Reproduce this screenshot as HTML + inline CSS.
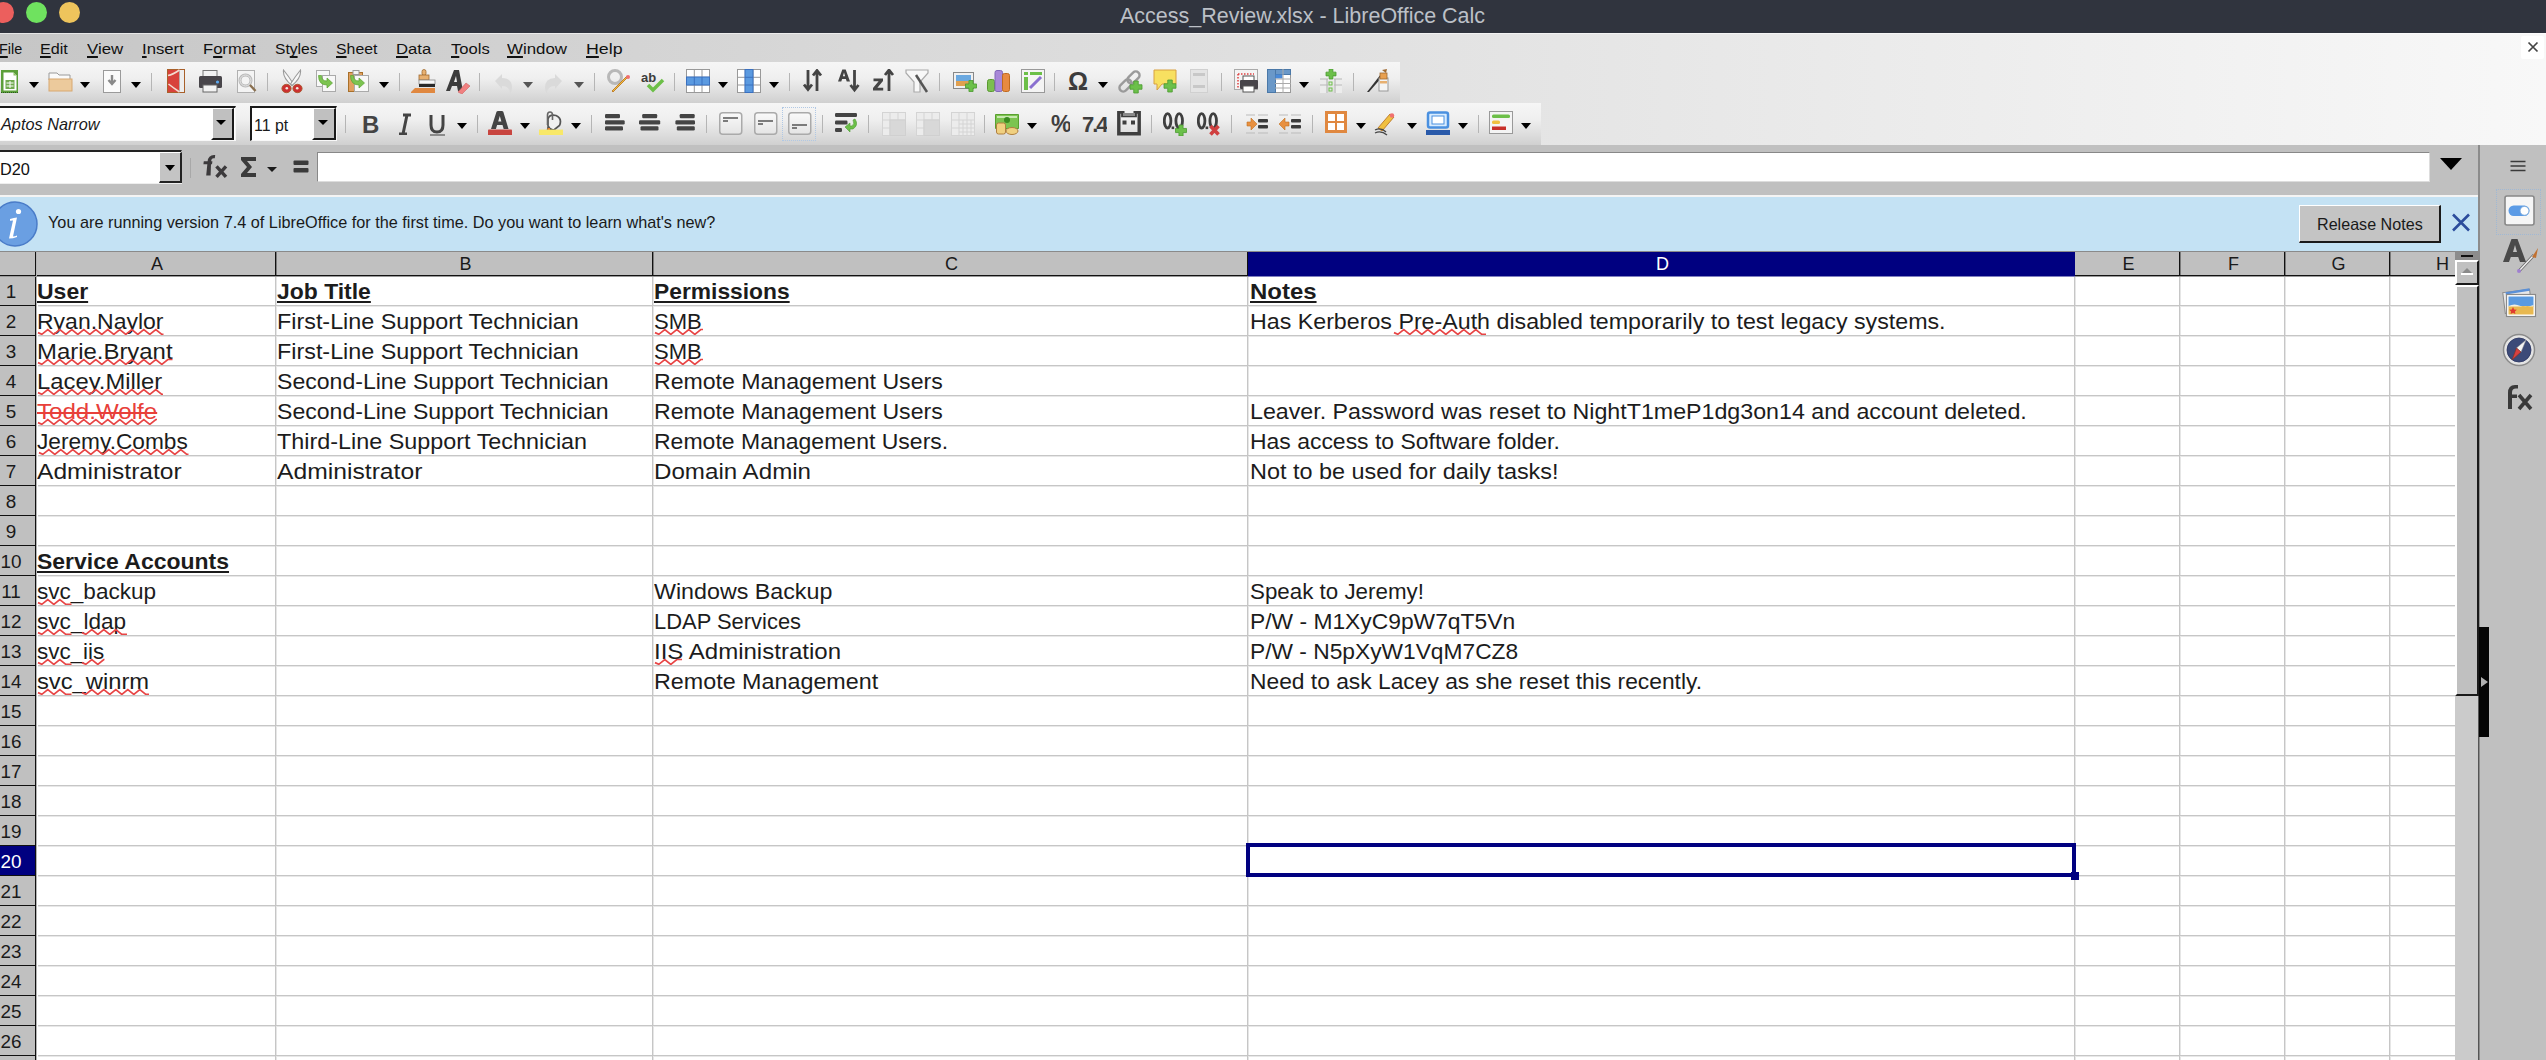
<!DOCTYPE html><html><head><meta charset="utf-8"><style>
*{margin:0;padding:0;box-sizing:border-box}
html,body{width:2546px;height:1060px;overflow:hidden;background:#c0c0c0;font-family:"Liberation Sans", sans-serif;}
.a{position:absolute}
.t{position:absolute;white-space:nowrap;line-height:1}
.ic{position:absolute}
.dd{position:absolute;width:0;height:0;border-left:5px solid transparent;border-right:5px solid transparent;border-top:6px solid #000}
.sep{position:absolute;width:1px;background:#b5b5b5}
.cell{position:absolute;white-space:nowrap;text-decoration-skip-ink:none;font-size:21.5px;line-height:1;color:#000;transform-origin:0 0}
</style></head><body>
<div class="a" style="left:0;top:0;width:2546px;height:33px;background:#30343e"></div>
<div class="a" style="left:-7px;top:2px;width:21px;height:21px;border-radius:50%;background:#ec5f5d"></div>
<div class="a" style="left:26px;top:2px;width:21px;height:21px;border-radius:50%;background:#6fe25f"></div>
<div class="a" style="left:59px;top:2px;width:21px;height:21px;border-radius:50%;background:#eec45c"></div>
<div class="t" style="left:1120.1px;top:4.5px;font-size:22px;color:#bcc0c7;transform:scaleX(0.9769);transform-origin:0 0;">Access_Review.xlsx - LibreOffice Calc</div>
<div class="a" style="left:0;top:33px;width:2546px;height:112px;background:linear-gradient(to right,#c6c6c6 0%,#d4d4d4 25%,#e2e2e2 55%,#eeeeee 80%,#f8f8f8 100%)"></div>
<div class="t" style="left:-0.63px;top:40.6px;font-size:15.5px;color:#111;transform:scaleX(0.9291);transform-origin:0 0;"><u style="text-decoration-thickness:1.5px;text-underline-offset:2px;text-decoration-skip-ink:none">F</u>ile</div>
<div class="t" style="left:40.46px;top:40.6px;font-size:15.5px;color:#111;transform:scaleX(1.0416);transform-origin:0 0;"><u style="text-decoration-thickness:1.5px;text-underline-offset:2px;text-decoration-skip-ink:none">E</u>dit</div>
<div class="t" style="left:87.4px;top:40.6px;font-size:15.5px;color:#111;transform:scaleX(1.0843);transform-origin:0 0;"><u style="text-decoration-thickness:1.5px;text-underline-offset:2px;text-decoration-skip-ink:none">V</u>iew</div>
<div class="t" style="left:142.22px;top:40.6px;font-size:15.5px;color:#111;transform:scaleX(1.0791);transform-origin:0 0;"><u style="text-decoration-thickness:1.5px;text-underline-offset:2px;text-decoration-skip-ink:none">I</u>nsert</div>
<div class="t" style="left:202.53px;top:40.6px;font-size:15.5px;color:#111;transform:scaleX(1.0701);transform-origin:0 0;">F<u style="text-decoration-thickness:1.5px;text-underline-offset:2px;text-decoration-skip-ink:none">o</u>rmat</div>
<div class="t" style="left:274.6px;top:40.6px;font-size:15.5px;color:#111;transform:scaleX(1.008);transform-origin:0 0;">St<u style="text-decoration-thickness:1.5px;text-underline-offset:2px;text-decoration-skip-ink:none">y</u>les</div>
<div class="t" style="left:336.3px;top:40.6px;font-size:15.5px;color:#111;transform:scaleX(1.0219);transform-origin:0 0;"><u style="text-decoration-thickness:1.5px;text-underline-offset:2px;text-decoration-skip-ink:none">S</u>heet</div>
<div class="t" style="left:395.63px;top:40.6px;font-size:15.5px;color:#111;transform:scaleX(1.0741);transform-origin:0 0;"><u style="text-decoration-thickness:1.5px;text-underline-offset:2px;text-decoration-skip-ink:none">D</u>ata</div>
<div class="t" style="left:450.7px;top:40.6px;font-size:15.5px;color:#111;transform:scaleX(1.0704);transform-origin:0 0;"><u style="text-decoration-thickness:1.5px;text-underline-offset:2px;text-decoration-skip-ink:none">T</u>ools</div>
<div class="t" style="left:507.3px;top:40.6px;font-size:15.5px;color:#111;transform:scaleX(1.0888);transform-origin:0 0;"><u style="text-decoration-thickness:1.5px;text-underline-offset:2px;text-decoration-skip-ink:none">W</u>indow</div>
<div class="t" style="left:585.85px;top:40.6px;font-size:15.5px;color:#111;transform:scaleX(1.1468);transform-origin:0 0;"><u style="text-decoration-thickness:1.5px;text-underline-offset:2px;text-decoration-skip-ink:none">H</u>elp</div>
<div class="a" style="left:0;top:33px;width:2546px;height:1px;background:rgba(255,255,255,0.55)"></div>
<div class="a" style="left:2521px;top:36px;width:23px;height:23px;background:#fff;border-radius:2px"></div>
<svg class="ic" style="left:2527px;top:41px" width="12" height="12" viewBox="0 0 12 12"><path d="M1.5,1.5 l9,9 M10.5,1.5 l-9,9" stroke="#444" stroke-width="1.7"/></svg>
<div class="a" style="left:0;top:62px;width:1400px;height:41px;background:linear-gradient(#f6f6f6,#efefef 40%,#d0d0d0)"></div>
<div class="a" style="left:0;top:103px;width:1541px;height:42px;background:linear-gradient(#f6f6f6,#efefef 40%,#d0d0d0)"></div>
<svg width="0" height="0" style="position:absolute"><defs><linearGradient id="gbox" x1="0" y1="0" x2="0" y2="1"><stop offset="0" stop-color="#fafafa"/><stop offset="1" stop-color="#e4e4e4"/></linearGradient></defs></svg>
<svg class="ic" style="left:0px;top:69px" width="19" height="25" viewBox="0 0 19 25"><rect x="1" y="1" width="17" height="23" fill="#5c9f3a"/><path d="M3.5,3.5 h10 l3,3 v15 h-13 z" fill="#fff"/><path d="M13.5,3.5 l3,3 h-3z" fill="#8cc060"/><rect x="5.5" y="11" width="9" height="9" fill="#72aa50"/><path d="M6.5,14 h7 M6.5,17 h7 M10,12 v7" stroke="#fff" stroke-width="1"/><path d="M1,23.5 h17" stroke="#2a5a20" stroke-width="1" stroke-dasharray="1,1"/></svg>
<div class="dd" style="left:29px;top:82px;border-left-width:5.0px;border-right-width:5.0px;border-top:6px solid #000"></div>
<svg class="ic" style="left:48px;top:70px" width="25" height="22" viewBox="0 0 25 22"><path d="M1,3 h8 l2,2 h11 v5 h-21 z" fill="#fafafa" stroke="#9a9a9a" stroke-width="1"/><rect x="1" y="9" width="23" height="12" fill="#ecca9c" stroke="#d8a870" stroke-width="1"/></svg>
<div class="dd" style="left:80px;top:82px;border-left-width:5.0px;border-right-width:5.0px;border-top:6px solid #000"></div>
<svg class="ic" style="left:102px;top:69px" width="20" height="25" viewBox="0 0 20 25"><rect x="1.5" y="1.5" width="17" height="22" fill="#fbfbfb" stroke="#9a9a9a" stroke-width="1"/><path d="M10,6 v8 M6.5,11 l3.5,4 l3.5,-4" stroke="#8a8a8a" stroke-width="2.4" fill="none"/></svg>
<div class="dd" style="left:131px;top:82px;border-left-width:5.0px;border-right-width:5.0px;border-top:6px solid #000"></div>
<div class="sep" style="left:151px;top:73px;height:18px"></div>
<svg class="ic" style="left:167px;top:69px" width="18" height="25" viewBox="0 0 18 25"><rect x="0.5" y="0.5" width="17" height="23" fill="#d8423b" stroke="#a8602a" stroke-width="1"/><path d="M12.5,1 v22 h4.5 v-22z" fill="#eeeeee"/><path d="M12.5,1 v22" stroke="#b0b0b0" stroke-width="0.8"/><path d="M1,6.5 q5,-1 11.5,-5.5 M1.5,15 q5,4 11,8" stroke="#f2dcd0" stroke-width="1.6" fill="none"/></svg>
<svg class="ic" style="left:198px;top:69px" width="25" height="25" viewBox="0 0 25 25"><rect x="5" y="1.5" width="14" height="7" fill="#f2f2f2" stroke="#777" stroke-width="1"/><rect x="1" y="7" width="23" height="12" rx="1.5" fill="#48454a"/><circle cx="19.5" cy="13" r="1.6" fill="#5aa8f0"/><rect x="5" y="16" width="14" height="7" fill="#f2f2f2" stroke="#666" stroke-width="1"/></svg>
<svg class="ic" style="left:236px;top:69px" width="21" height="25" viewBox="0 0 21 25"><rect x="1.5" y="1.5" width="17" height="22" fill="#f4f4f4" stroke="#b0b0b0" stroke-width="1"/><circle cx="9.5" cy="11.5" r="5.5" fill="none" stroke="#b8b8b8" stroke-width="3"/><circle cx="9.5" cy="11.5" r="5.5" fill="none" stroke="#e8e8e8" stroke-width="1"/><path d="M14,16 l5.5,6" stroke="#8a7050" stroke-width="2.4"/></svg>
<div class="sep" style="left:267px;top:73px;height:18px"></div>
<svg class="ic" style="left:281px;top:69px" width="22" height="25" viewBox="0 0 22 25"><path d="M2.5,1 q-1,8 8.5,15.5 l1.5,-1.5 q-5,-8 -10,-14z" fill="#f8f8f8" stroke="#9a9a9a" stroke-width="1.1"/><path d="M19.5,1 q1,8 -8.5,15.5 l-1.5,-1.5 q5,-8 10,-14z" fill="#f8f8f8" stroke="#9a9a9a" stroke-width="1.1"/><ellipse cx="5.5" cy="19.5" rx="4.6" ry="4.2" fill="#cc3030" stroke="#a85a30" stroke-width="0.9"/><ellipse cx="16.5" cy="19.5" rx="4.6" ry="4.2" fill="#cc3030" stroke="#a85a30" stroke-width="0.9"/><circle cx="5.8" cy="19.2" r="1.3" fill="#f4e8e0"/><circle cx="16.2" cy="19.2" r="1.3" fill="#f4e8e0"/></svg>
<svg class="ic" style="left:316px;top:70px" width="21" height="23" viewBox="0 0 21 23"><rect x="0.5" y="0.5" width="13" height="16" fill="#f8f8f8" stroke="#aaa" stroke-width="1"/><rect x="6.5" y="5.5" width="13" height="16" fill="#f8f8f8" stroke="#aaa" stroke-width="1"/><path d="M2.5,5.5 h3 q0,5.5 5.5,5.5 v-3 l5.5,5 l-5.5,5 v-3 q-8.5,0 -8.5,-9.5z" fill="#7cc450" stroke="#5aa030" stroke-width="0.7"/></svg>
<svg class="ic" style="left:348px;top:70px" width="22" height="23" viewBox="0 0 22 23"><rect x="0.5" y="2.5" width="14" height="19" fill="#e0a060" stroke="#a8702a" stroke-width="1"/><rect x="5" y="0.5" width="6" height="4" fill="#f4f4f4" stroke="#999" stroke-width="1"/><rect x="6.5" y="5.5" width="14" height="16" fill="#f8f8f8" stroke="#aaa" stroke-width="1"/><path d="M2.5,5.5 h3 q0,5.5 5.5,5.5 v-3 l5.5,5 l-5.5,5 v-3 q-8.5,0 -8.5,-9.5z" fill="#7cc450" stroke="#5aa030" stroke-width="0.7"/></svg>
<div class="dd" style="left:379px;top:82px;border-left-width:5.0px;border-right-width:5.0px;border-top:6px solid #000"></div>
<div class="sep" style="left:399px;top:73px;height:18px"></div>
<svg class="ic" style="left:411px;top:69px" width="25" height="25" viewBox="0 0 25 25"><rect x="11" y="0.5" width="4" height="6" rx="2" fill="#e8b070" stroke="#a06a30" stroke-width="0.8"/><rect x="8" y="6" width="10" height="5" fill="#e8b070" stroke="#a06a30" stroke-width="0.8"/><rect x="8" y="11" width="16" height="4" fill="#f8f8f8" stroke="#888" stroke-width="0.8"/><rect x="8" y="15" width="16" height="3" fill="#2a2a2a"/><path d="M0,23 l4,-4 h20 v5 h-24z" fill="#e08840"/></svg>
<svg class="ic" style="left:446px;top:69px" width="25" height="25" viewBox="0 0 25 25"><path d="M0,22 l8,-21 h5 l4,21 h-5 l-1,-5 h-5 l-2,5z M8,13 h3 l-1,-6z" fill="#3c3c3c" fill-rule="evenodd"/><path d="M12,23 l8,-9 l4,3 l-8,8z" fill="#f08080" stroke="#d06060" stroke-width="0.6"/></svg>
<div class="sep" style="left:479px;top:73px;height:18px"></div>
<svg class="ic" style="left:494px;top:73px" width="19" height="22" viewBox="0 0 19 22"><path d="M1,8 l7,-7 v4 q10,0 10,10 q0,3 -2,6 q0,-8 -8,-8 v3z" fill="#dadada"/></svg>
<div class="dd" style="left:523px;top:82px;border-left-width:5.0px;border-right-width:5.0px;border-top:6px solid #555"></div>
<svg class="ic" style="left:544px;top:73px" width="19" height="22" viewBox="0 0 19 22"><path d="M18,8 l-7,-7 v4 q-10,0 -10,10 q0,3 2,6 q0,-8 8,-8 v3z" fill="#dadada"/></svg>
<div class="dd" style="left:574px;top:82px;border-left-width:5.0px;border-right-width:5.0px;border-top:6px solid #555"></div>
<div class="sep" style="left:594px;top:73px;height:18px"></div>
<svg class="ic" style="left:607px;top:69px" width="24" height="25" viewBox="0 0 24 25"><circle cx="8" cy="8" r="6.5" fill="none" stroke="#b8b8b8" stroke-width="3"/><path d="M21,8 l-15,15 l-1,-1 l15,-15z" fill="#f0c040" stroke="#c08030" stroke-width="1"/><circle cx="21" cy="8" r="2" fill="#f07070"/></svg>
<svg class="ic" style="left:641px;top:69px" width="24" height="25" viewBox="0 0 24 25"><text x="0" y="13" font-family="Liberation Sans" font-weight="bold" font-size="13" fill="#3c3c3c">ab</text><path d="M7,16 l5,5 l10,-10" stroke="#6cbf48" stroke-width="3.5" fill="none"/></svg>
<div class="sep" style="left:674px;top:73px;height:18px"></div>
<svg class="ic" style="left:686px;top:69px" width="24" height="24" viewBox="0 0 24 24"><rect x="0.5" y="0.5" width="23" height="23" fill="#fff" stroke="#999" stroke-width="1"/><path d="M8.3,0 v24 M16,0 v24 M0,8.3 h24 M0,16 h24" stroke="#999" stroke-width="1"/><rect x="0.5" y="8" width="23" height="8" fill="#5b9ae0" stroke="#3a70c0" stroke-width="1"/><path d="M8.3,8 v8 M16,8 v8" stroke="#3a70c0" stroke-width="1"/></svg>
<div class="dd" style="left:718px;top:82px;border-left-width:5.0px;border-right-width:5.0px;border-top:6px solid #000"></div>
<svg class="ic" style="left:737px;top:69px" width="24" height="24" viewBox="0 0 24 24"><rect x="0.5" y="0.5" width="23" height="23" fill="#fff" stroke="#999" stroke-width="1"/><path d="M8.3,0 v24 M16,0 v24 M0,8.3 h24 M0,16 h24" stroke="#999" stroke-width="1"/><rect x="8" y="0.5" width="8" height="23" fill="#5b9ae0" stroke="#3a70c0" stroke-width="1"/><path d="M8,8.3 h8 M8,16 h8" stroke="#3a70c0" stroke-width="1"/></svg>
<div class="dd" style="left:769px;top:82px;border-left-width:5.0px;border-right-width:5.0px;border-top:6px solid #000"></div>
<div class="sep" style="left:789px;top:73px;height:18px"></div>
<svg class="ic" style="left:803px;top:69px" width="22" height="24" viewBox="0 0 22 24"><path d="M5,1 v19 M1,15.5 l4,5 l4,-5" stroke="#444" stroke-width="2.8" fill="none"/><path d="M14,22 v-19 M10,6.5 l4,-5 l4,5" stroke="#444" stroke-width="2.8" fill="none"/></svg>
<svg class="ic" style="left:838px;top:69px" width="22" height="24" viewBox="0 0 22 24"><path d="M0,12.5 L4.3,0.5 h3.4 L12,12.5 h-3.3 l-0.8,-2.6 h-3.8 l-0.8,2.6z M4.9,7.2 h2.2 l-1.1,-3.6z" fill="#444" fill-rule="evenodd"/><path d="M16.5,1 v20 M12.5,16 l4,5 l4,-5" stroke="#444" stroke-width="2.8" fill="none"/></svg>
<svg class="ic" style="left:873px;top:69px" width="22" height="24" viewBox="0 0 22 24"><path d="M0.5,9.5 h9.5 v2.6 l-5.6,6.6 h5.8 v2.8 h-10.2 v-2.6 l5.6,-6.6 h-5.1z" fill="#444"/><path d="M16,22 v-20 M12,6 l4,-5 l4,5" stroke="#444" stroke-width="2.8" fill="none"/></svg>
<svg class="ic" style="left:905px;top:69px" width="24" height="24" viewBox="0 0 24 24"><path d="M1,1 h22 v3 l-8,9 v10 h-6 v-10 l-8,-9z" fill="#f8f8f8" stroke="#aaa" stroke-width="1.2"/><path d="M11,6 l11,17" stroke="#555" stroke-width="2.5"/></svg>
<div class="sep" style="left:939px;top:73px;height:18px"></div>
<svg class="ic" style="left:953px;top:69px" width="24" height="24" viewBox="0 0 24 24"><rect x="0.5" y="3.5" width="20" height="16" fill="#f0f0f0" stroke="#888" stroke-width="1"/><rect x="3" y="6" width="15" height="11" fill="#6aa8e0"/><rect x="3" y="12" width="15" height="5" fill="#e0a050"/><path d="M15.9375,11.5 h4.125 v3.4375 h3.4375 v4.125 h-3.4375 v3.4375 h-4.125 v-3.4375 h-3.4375 v-4.125 h3.4375 z" fill="#6cc04a" stroke="#4a9a30" stroke-width="0.8"/></svg>
<svg class="ic" style="left:987px;top:69px" width="24" height="24" viewBox="0 0 24 24"><rect x="0.5" y="10.5" width="7" height="12" rx="2" fill="#7cbf50" stroke="#5a9a30" stroke-width="1"/><rect x="8" y="1.5" width="7.5" height="21" rx="2" fill="#a888d8" stroke="#8068b8" stroke-width="1"/><rect x="15.5" y="4.5" width="7" height="18" rx="2" fill="#e88a40" stroke="#c06a20" stroke-width="1"/></svg>
<svg class="ic" style="left:1021px;top:69px" width="24" height="24" viewBox="0 0 24 24"><rect x="0.5" y="0.5" width="23" height="23" fill="#f4f4f4" stroke="#999" stroke-width="1"/><rect x="3" y="3" width="4" height="3" fill="#6cbf48"/><rect x="9" y="3" width="12" height="3" fill="#6cbf48"/><rect x="3" y="8" width="4" height="13" fill="#6cbf48"/><path d="M9,19 l11,-11" stroke="#8a70d0" stroke-width="3"/></svg>
<div class="sep" style="left:1054px;top:73px;height:18px"></div>
<svg class="ic" style="left:1067px;top:69px" width="22" height="24" viewBox="0 0 22 24"><text x="11" y="21" text-anchor="middle" font-family="Liberation Sans" font-weight="bold" font-size="25" fill="#3c3c3c">&#937;</text></svg>
<div class="dd" style="left:1098px;top:82px;border-left-width:5.0px;border-right-width:5.0px;border-top:6px solid #000"></div>
<svg class="ic" style="left:1118px;top:69px" width="25" height="25" viewBox="0 0 25 25"><rect x="-3.8" y="-7" width="7.6" height="14" rx="3.8" transform="translate(7.5,16.5) rotate(45)" fill="none" stroke="#9a9a9a" stroke-width="2.4"/><rect x="-3.8" y="-7" width="7.6" height="14" rx="3.8" transform="translate(15.5,8.5) rotate(45)" fill="none" stroke="#9a9a9a" stroke-width="2.4"/><path d="M15.75,12 h4.5 v3.75 h3.75 v4.5 h-3.75 v3.75 h-4.5 v-3.75 h-3.75 v-4.5 h3.75 z" fill="#6cc04a" stroke="#4a9a30" stroke-width="0.8"/></svg>
<svg class="ic" style="left:1153px;top:69px" width="25" height="25" viewBox="0 0 25 25"><path d="M1,1 h22 v14 h-14 l-5,6 v-6 h-3z" fill="#f8e060" stroke="#d8a040" stroke-width="1"/><path d="M14.75,11 h4.5 v3.75 h3.75 v4.5 h-3.75 v3.75 h-4.5 v-3.75 h-3.75 v-4.5 h3.75 z" fill="#6cc04a" stroke="#4a9a30" stroke-width="0.8"/></svg>
<svg class="ic" style="left:1190px;top:69px" width="18" height="24" viewBox="0 0 18 24"><rect x="0.5" y="0.5" width="17" height="23" fill="#e4e4e4" stroke="#d0d0d0" stroke-width="1"/><rect x="3" y="4" width="12" height="3" fill="#c8c8c8"/><rect x="3" y="16" width="12" height="3" fill="#c8c8c8"/></svg>
<div class="sep" style="left:1221px;top:73px;height:18px"></div>
<svg class="ic" style="left:1234px;top:69px" width="24" height="24" viewBox="0 0 24 24"><rect x="0.5" y="0.5" width="23" height="20" fill="#f4f4f4" stroke="#aaa" stroke-width="1"/><path d="M4,5 h16 M4,5 v14" stroke="#e04040" stroke-width="1.5" stroke-dasharray="1.5,1.5"/><rect x="9" y="7" width="11" height="6" fill="#fff" stroke="#555" stroke-width="1"/><rect x="6" y="11" width="18" height="9" rx="1" fill="#48454a"/><rect x="9" y="17" width="11" height="6" fill="#fff" stroke="#555" stroke-width="1"/></svg>
<svg class="ic" style="left:1267px;top:69px" width="24" height="24" viewBox="0 0 24 24"><rect x="0.5" y="0.5" width="23" height="23" fill="#fff" stroke="#999" stroke-width="1"/><rect x="0.5" y="0.5" width="23" height="5" fill="#6a98c8" stroke="#4a78a8" stroke-width="1"/><rect x="0.5" y="0.5" width="8" height="23" fill="#6a98c8" stroke="#4a78a8" stroke-width="1"/><rect x="8.5" y="5.5" width="7" height="4" fill="#4a8ad8"/><path d="M8,10 h16 M8,14.5 h16 M8,19 h16 M16,0 v24" stroke="#aaa" stroke-width="1"/></svg>
<div class="dd" style="left:1299px;top:82px;border-left-width:5.0px;border-right-width:5.0px;border-top:6px solid #000"></div>
<svg class="ic" style="left:1319px;top:69px" width="24" height="24" viewBox="0 0 24 24"><rect x="1" y="10" width="8" height="14" fill="#ececec"/><rect x="15" y="10" width="8" height="14" fill="#ececec"/><path d="M1,10 h8 M1,16 h8 M15,10 h8 M15,16 h8 M8,10 v14 M16,10 v14" stroke="#b8b8b8" stroke-width="1.2"/><rect x="10" y="13" width="3" height="3" fill="none" stroke="#6cbf48" stroke-width="1"/><rect x="10" y="19" width="3" height="3" fill="none" stroke="#6cbf48" stroke-width="1"/><path d="M10.125,0 h3.75 v3.125 h3.125 v3.75 h-3.125 v3.125 h-3.75 v-3.125 h-3.125 v-3.75 h3.125 z" fill="#6cc04a" stroke="#4a9a30" stroke-width="0.8"/></svg>
<div class="sep" style="left:1353px;top:73px;height:18px"></div>
<svg class="ic" style="left:1366px;top:69px" width="24" height="24" viewBox="0 0 24 24"><path d="M1,23 l14,-18 l2,2 l-14,16z" fill="#333"/><rect x="13" y="9" width="9" height="13" fill="#f4f4f4" stroke="#999" stroke-width="1"/><rect x="14" y="4" width="7" height="6" fill="#e8a050" stroke="#a06a30" stroke-width="0.8"/><rect x="14" y="12" width="7" height="2.5" fill="#e8b070"/><path d="M16,1 l5,-1 l-1,4z" fill="#a06a30"/></svg>
<div class="a" style="left:-2px;top:106px;width:238px;height:35px;background:#fff;border-top:2px solid #1a1a1a;border-left:2px solid #1a1a1a;border-bottom:1px solid #f8f8f8;border-right:1px solid #f8f8f8"></div>
<div class="a" style="left:211px;top:108px;width:23px;height:32px;background:#c0c0c0;border-left:2px solid #fff;border-top:1px solid #fff;border-right:2px solid #1a1a1a;border-bottom:2px solid #1a1a1a"></div>
<div class="dd" style="left:216px;top:120px;border-left-width:5.0px;border-right-width:5.0px;border-top:5px solid #000"></div>
<div class="t" style="left:1.26px;top:116px;font-size:17px;color:#1a1a1a;transform:scaleX(0.9574);transform-origin:0 0;font-style:italic;">Aptos Narrow</div>
<div class="a" style="left:250px;top:106px;width:87px;height:35px;background:#fff;border-top:2px solid #1a1a1a;border-left:2px solid #1a1a1a;border-bottom:1px solid #f8f8f8;border-right:1px solid #f8f8f8"></div>
<div class="a" style="left:312px;top:108px;width:24px;height:32px;background:#c0c0c0;border-left:2px solid #fff;border-top:1px solid #fff;border-right:2px solid #1a1a1a;border-bottom:2px solid #1a1a1a"></div>
<div class="dd" style="left:318px;top:120px;border-left-width:5.0px;border-right-width:5.0px;border-top:5px solid #000"></div>
<div class="t" style="left:254.06px;top:116.6px;font-size:17px;color:#1a1a1a;transform:scaleX(0.9351);transform-origin:0 0;">11 pt</div>
<div class="sep" style="left:345px;top:115px;height:18px"></div>
<svg class="ic" style="left:362px;top:113px" width="17" height="22" viewBox="0 0 17 22"><text x="0" y="20" font-family="Liberation Sans" font-weight="bold" font-size="24" fill="#444">B</text></svg>
<svg class="ic" style="left:398px;top:113px" width="14" height="22" viewBox="0 0 14 22"><path d="M5,2 h8 M1,21 h8 M9,2 l-4,19" stroke="#444" stroke-width="3" fill="none"/></svg>
<svg class="ic" style="left:429px;top:113px" width="17" height="23" viewBox="0 0 17 23"><path d="M2,2 v10 q0,7 6,7 q6,0 6,-7 v-10" stroke="#444" stroke-width="3" fill="none"/><path d="M1,22 h15" stroke="#555" stroke-width="1.2"/></svg>
<div class="dd" style="left:457px;top:123px;border-left-width:5.0px;border-right-width:5.0px;border-top:6px solid #000"></div>
<div class="sep" style="left:477px;top:115px;height:18px"></div>
<svg class="ic" style="left:488px;top:111px" width="24" height="24" viewBox="0 0 24 24"><path d="M3,18 L8.5,0.8 q0.5,-0.8 1.5,-0.8 h3.8 q1,0 1.5,0.8 L20.5,18 h-4.8 l-1.2,-4 h-5.4 l-1.2,4z M10.2,10.5 h3.2 l-1.6,-5.5z" fill="#444" fill-rule="evenodd"/><rect x="0" y="18.6" width="24" height="5.8" rx="0.8" fill="#c8453f"/></svg>
<div class="dd" style="left:520px;top:123px;border-left-width:5.0px;border-right-width:5.0px;border-top:6px solid #000"></div>
<svg class="ic" style="left:539px;top:111px" width="24" height="24" viewBox="0 0 24 24"><path d="M9,8 q1.5,-5 8,-3.5 q6.5,3 3.5,10 l-5,4 q-4,1.5 -6.5,-3.5z" fill="#f0f0f0" stroke="#555" stroke-width="1.7"/><path d="M8.5,14 v-10 q0,-3 2.5,-3 q2.5,0 2.5,3 v5" stroke="#666" stroke-width="1.6" fill="none"/><path d="M9,16 l-0.5,3" stroke="#555" stroke-width="1.5"/><rect x="8.5" y="17" width="2.5" height="2" fill="#e08030"/><rect x="0" y="18.6" width="24" height="5.8" fill="#f8e868"/></svg>
<div class="dd" style="left:571px;top:123px;border-left-width:5.0px;border-right-width:5.0px;border-top:6px solid #000"></div>
<div class="sep" style="left:591px;top:115px;height:18px"></div>
<svg class="ic" style="left:605px;top:114px" width="21" height="17" viewBox="0 0 21 17"><rect x="0" y="0" width="15" height="4.3" rx="1.2" fill="#444"/><rect x="0" y="6.2" width="19.7" height="4.3" rx="1.2" fill="#444"/><rect x="0" y="12.2" width="18" height="4.3" rx="1.2" fill="#444"/></svg>
<svg class="ic" style="left:639px;top:114px" width="22" height="17" viewBox="0 0 22 17"><rect x="3.2" y="0" width="15" height="4.3" rx="1.2" fill="#444"/><rect x="0" y="6.2" width="21.2" height="4.3" rx="1.2" fill="#444"/><rect x="1.5" y="12.2" width="18" height="4.3" rx="1.2" fill="#444"/></svg>
<svg class="ic" style="left:675px;top:114px" width="21" height="17" viewBox="0 0 21 17"><rect x="4.7" y="0" width="15" height="4.3" rx="1.2" fill="#444"/><rect x="0.4" y="6.2" width="19.6" height="4.3" rx="1.2" fill="#444"/><rect x="1.8" y="12.2" width="18" height="4.3" rx="1.2" fill="#444"/></svg>
<div class="sep" style="left:706px;top:115px;height:18px"></div>
<svg class="ic" style="left:719px;top:112px" width="24" height="23" viewBox="0 0 24 23"><rect x="0.75" y="0.75" width="22" height="21.5" rx="3" fill="url(#gbox)" stroke="#aaa" stroke-width="1.5"/><path d="M4,6 h15 M4,9 h5" stroke="#555" stroke-width="1.3"/></svg>
<svg class="ic" style="left:754px;top:112px" width="24" height="23" viewBox="0 0 24 23"><rect x="0.75" y="0.75" width="22" height="21.5" rx="3" fill="url(#gbox)" stroke="#aaa" stroke-width="1.5"/><path d="M4,9 h15 M4,12 h5" stroke="#555" stroke-width="1.3"/></svg>
<div class="a" style="left:782px;top:107px;width:34px;height:34px;border:1px dotted #b0c8e4"></div>
<svg class="ic" style="left:788px;top:112px" width="24" height="23" viewBox="0 0 24 23"><rect x="0.75" y="0.75" width="22" height="21.5" rx="3" fill="url(#gbox)" stroke="#aaa" stroke-width="1.5"/><path d="M4,13 h15 M4,16 h5" stroke="#555" stroke-width="1.3"/></svg>
<div class="sep" style="left:822px;top:115px;height:18px"></div>
<svg class="ic" style="left:835px;top:113px" width="24" height="23" viewBox="0 0 24 23"><rect x="0" y="0" width="22" height="4" rx="1.2" fill="#444"/><rect x="0" y="7.5" width="12.5" height="4" rx="1.2" fill="#444"/><rect x="0" y="15" width="7" height="4" rx="1.2" fill="#444"/><path d="M20,6 q4,6 -2,10 h-3 v3 l-5,-5 l5,-4 v3 h2 q3,-2 1,-6z" fill="#6cbf48" stroke="#4a9a30" stroke-width="0.6"/></svg>
<div class="sep" style="left:868px;top:115px;height:18px"></div>
<svg class="ic" style="left:882px;top:112px" width="24" height="24" viewBox="0 0 24 24"><rect x="0.5" y="0.5" width="23" height="23" fill="#ececec" stroke="#d4d4d4" stroke-width="1"/><path d="M8,0 v24 M16,0 v24 M0,8 h24 M0,16 h24" stroke="#d4d4d4" stroke-width="1"/><rect x="8" y="8" width="15.5" height="15.5" fill="#d8d8d8" stroke="#d0d0d0"/></svg>
<svg class="ic" style="left:916px;top:112px" width="24" height="24" viewBox="0 0 24 24"><rect x="0.5" y="0.5" width="23" height="23" fill="#ececec" stroke="#d4d4d4" stroke-width="1"/><path d="M8,0 v24 M16,0 v24 M0,8 h24 M0,16 h24" stroke="#d4d4d4" stroke-width="1"/><rect x="8" y="8" width="15.5" height="15.5" fill="#d8d8d8" stroke="#d0d0d0"/></svg>
<svg class="ic" style="left:951px;top:112px" width="24" height="24" viewBox="0 0 24 24"><rect x="0.5" y="0.5" width="23" height="23" fill="#ececec" stroke="#d4d4d4" stroke-width="1"/><path d="M8,0 v24 M16,0 v24 M0,8 h24 M0,16 h24" stroke="#d4d4d4" stroke-width="1"/><path d="M8,12 h16 M12,8 v16 M20,8 v16 M8,20 h16" stroke="#d4d4d4" stroke-width="1"/></svg>
<div class="sep" style="left:984px;top:115px;height:18px"></div>
<svg class="ic" style="left:995px;top:112px" width="24" height="24" viewBox="0 0 24 24"><path d="M0.5,2.5 h23 v14 h-23z" fill="#7cc450" stroke="#5aa030" stroke-width="1"/><rect x="2" y="4" width="20" height="2" fill="#c8e8b0"/><circle cx="12" cy="8" r="3" fill="#3a8a20"/><rect x="1.5" y="11" width="9" height="11" rx="2" fill="#f0d080" stroke="#b08040" stroke-width="1"/><ellipse cx="17" cy="19" rx="6" ry="3.5" fill="#f0d080" stroke="#b08040" stroke-width="1"/></svg>
<div class="dd" style="left:1027px;top:123px;border-left-width:5.0px;border-right-width:5.0px;border-top:6px solid #000"></div>
<svg class="ic" style="left:1051px;top:114px" width="19" height="20" viewBox="0 0 19 20"><text x="0" y="18" font-family="Liberation Sans" font-weight="bold" font-size="23" fill="#3f3f3f">%</text></svg>
<svg class="ic" style="left:1082px;top:114px" width="25" height="20" viewBox="0 0 25 20"><text x="0" y="18" font-family="Liberation Sans" font-weight="bold" font-size="22" fill="#3f3f3f" letter-spacing="-2">7.4</text></svg>
<svg class="ic" style="left:1117px;top:111px" width="24" height="25" viewBox="0 0 24 25"><path d="M1.8,1 v21.8 h20.4 v-21.8 h-4 v3.5 h-12.4 v-3.5z" fill="none" stroke="#3f3f3f" stroke-width="3.4"/><rect x="6" y="2" width="12" height="3" fill="#8a8a8a"/><rect x="5.5" y="9.5" width="4" height="4" fill="#3f3f3f"/><rect x="14" y="9.5" width="4" height="4" fill="#3f3f3f"/></svg>
<div class="sep" style="left:1151px;top:115px;height:18px"></div>
<svg class="ic" style="left:1163px;top:112px" width="24" height="24" viewBox="0 0 24 24"><ellipse cx="4.6" cy="8.8" rx="3.3" ry="7.2" fill="none" stroke="#3f3f3f" stroke-width="2.8"/><rect x="8.6" y="14.5" width="2.6" height="2.6" fill="#3f3f3f"/><ellipse cx="16.2" cy="8.8" rx="3.3" ry="7.2" fill="none" stroke="#3f3f3f" stroke-width="2.8"/><path d="M15.9375,13.0 h4.125 v3.4375 h3.4375 v4.125 h-3.4375 v3.4375 h-4.125 v-3.4375 h-3.4375 v-4.125 h3.4375 z" fill="#6cc04a" stroke="#4a9a30" stroke-width="0.8"/></svg>
<svg class="ic" style="left:1197px;top:112px" width="25" height="24" viewBox="0 0 25 24"><ellipse cx="4.6" cy="8.8" rx="3.3" ry="7.2" fill="none" stroke="#3f3f3f" stroke-width="2.8"/><rect x="8.6" y="14.5" width="2.6" height="2.6" fill="#3f3f3f"/><ellipse cx="16.2" cy="8.8" rx="3.3" ry="7.2" fill="none" stroke="#3f3f3f" stroke-width="2.8"/><path d="M13.5,14 l8,8.5 M21.5,14 l-8,8.5" stroke="#d04040" stroke-width="3.6"/></svg>
<div class="sep" style="left:1231px;top:115px;height:18px"></div>
<svg class="ic" style="left:1246px;top:112px" width="23" height="24" viewBox="0 0 23 24"><path d="M0,3 h9 M12,3 h10 M0,21 h9 M12,21 h10" stroke="#bbb" stroke-width="1"/><rect x="12" y="7" width="10" height="3.5" rx="1" fill="#3a3a3a"/><rect x="12" y="13" width="10" height="3.5" rx="1" fill="#3a3a3a"/><path d="M1,10 h4 v-4 l6,6 l-6,6 v-4 h-4z" fill="#e89040" stroke="#c07020" stroke-width="0.6"/></svg>
<svg class="ic" style="left:1279px;top:112px" width="23" height="24" viewBox="0 0 23 24"><path d="M0,3 h9 M12,3 h10 M0,21 h9 M12,21 h10" stroke="#bbb" stroke-width="1"/><rect x="12" y="7" width="10" height="3.5" rx="1" fill="#3a3a3a"/><rect x="12" y="13" width="10" height="3.5" rx="1" fill="#3a3a3a"/><path d="M10,10 h-4 v-4 l-6,6 l6,6 v-4 h4z" fill="#e89040" stroke="#c07020" stroke-width="0.6"/></svg>
<div class="sep" style="left:1312px;top:115px;height:18px"></div>
<svg class="ic" style="left:1325px;top:111px" width="23" height="23" viewBox="0 0 23 23"><rect x="1.5" y="1.5" width="19" height="19" fill="#fff" stroke="#e08840" stroke-width="3"/><path d="M11,2 v18 M2,11 h18" stroke="#e08840" stroke-width="2"/></svg>
<div class="dd" style="left:1356px;top:123px;border-left-width:5.0px;border-right-width:5.0px;border-top:6px solid #000"></div>
<svg class="ic" style="left:1374px;top:111px" width="23" height="25" viewBox="0 0 23 25"><path d="M4,17 l12,-14 l4,3 l-12,14z" fill="#f0c040" stroke="#c08030" stroke-width="1"/><circle cx="18" cy="4.5" r="2.2" fill="#f07070"/><path d="M1,19 q6,-3 11,2 M1,22 q6,-3 12,2" stroke="#444" stroke-width="1.3" fill="none"/></svg>
<div class="dd" style="left:1407px;top:123px;border-left-width:5.0px;border-right-width:5.0px;border-top:6px solid #000"></div>
<svg class="ic" style="left:1426px;top:111px" width="24" height="24" viewBox="0 0 24 24"><rect x="2" y="1.5" width="20" height="15" rx="2" fill="#d8ecff" stroke="#4a90e0" stroke-width="2.5"/><rect x="6" y="5" width="12" height="8" fill="#fff" stroke="#4a90e0" stroke-width="1"/><rect x="0" y="19" width="24" height="5" fill="#2a5aaa"/></svg>
<div class="dd" style="left:1458px;top:123px;border-left-width:5.0px;border-right-width:5.0px;border-top:6px solid #000"></div>
<div class="sep" style="left:1478px;top:115px;height:18px"></div>
<svg class="ic" style="left:1489px;top:111px" width="24" height="24" viewBox="0 0 24 24"><rect x="0.5" y="0.5" width="23" height="22" fill="#f4f4f4" stroke="#999" stroke-width="1"/><rect x="3" y="3.5" width="18" height="3.5" rx="1.5" fill="#6cbf48"/><rect x="3" y="9.5" width="8" height="3.5" rx="1.5" fill="#f0c040"/><rect x="3" y="15.5" width="14" height="3.5" fill="#c8302a"/></svg>
<div class="dd" style="left:1521px;top:123px;border-left-width:5.0px;border-right-width:5.0px;border-top:6px solid #000"></div>
<div class="a" style="left:0;top:145px;width:2480px;height:50px;background:#c0c0c0"></div>
<div class="a" style="left:0;top:195px;width:2480px;height:2px;background:#f4f4f4"></div>
<div class="a" style="left:-2px;top:150px;width:184px;height:34px;background:#fff;border-top:2px solid #222;border-left:2px solid #222;border-bottom:1px solid #eee;border-right:1px solid #eee"></div>
<div class="a" style="left:159px;top:152px;width:23px;height:31px;background:#c4c4c4;border-right:2px solid #222;border-bottom:2px solid #222;border-left:1px solid #fff;border-top:1px solid #fff"></div>
<div class="dd" style="left:165px;top:165px;border-left-width:5px;border-right-width:5px;border-top-width:6px"></div>
<div class="t" style="left:-0.46px;top:161px;font-size:17px;color:#111;transform:scaleX(0.9586);transform-origin:0 0;">D20</div>
<div class="sep" style="left:190px;top:158px;height:20px;background:#a8a8a8"></div>
<div class="a" style="left:317px;top:152px;width:2113px;height:30px;background:#fff;border-top:1px solid #888;border-left:1px solid #888;border-right:1px solid #ddd;border-bottom:1px solid #ddd"></div>
<div class="a" style="left:2440px;top:158px;width:0;height:0;border-left:11px solid transparent;border-right:11px solid transparent;border-top:12px solid #000"></div>
<svg class="ic" style="left:203px;top:154px" width="26" height="25" viewBox="0 0 26 25"><path d="M3.2,21.5 L4.6,7.5 q0.6,-6.5 6.4,-6.5 h1.2 l-0.4,3.2 h-1.2 q-2.2,0 -2.5,3.2 L7.6,21.5z" fill="#3c3a3c"/><path d="M0.8,7.2 h8.6 l-0.4,3 h-8.6z" fill="#3c3a3c"/><path d="M13.5,12.3 l9.5,10.5 M23,12.3 l-9.5,10.5" stroke="#3c3a3c" stroke-width="3.4"/></svg>
<svg class="ic" style="left:240px;top:156px" width="17" height="22" viewBox="0 0 17 22"><path d="M1,1 h15 v4 h-9 l5,6 l-5,6 h9 v4 h-15 v-3 l6,-7 l-6,-7z" fill="#3a3a3a"/></svg>
<div class="dd" style="left:267px;top:167px;border-left-width:5.5px;border-right-width:5.5px;border-top:5.5px solid #1a1a1a"></div>
<svg class="ic" style="left:293px;top:160px" width="16" height="14" viewBox="0 0 16 14"><rect x="0.5" y="0.5" width="15" height="4.5" rx="1" fill="#3a3a3a"/><rect x="0.5" y="8" width="15" height="4.5" rx="1" fill="#3a3a3a"/></svg>
<div class="a" style="left:0;top:197px;width:2478px;height:54px;background:#c4e2f4"></div>
<div class="a" style="left:0;top:251px;width:2480px;height:1px;background:#8a8a8a"></div>
<div class="t" style="left:48.2px;top:214.3px;font-size:17px;color:#1a1a1a;transform:scaleX(0.9564);transform-origin:0 0;">You are running version 7.4 of LibreOffice for the first time. Do you want to learn what&#39;s new?</div>
<div class="a" style="left:2299px;top:205px;width:142px;height:38px;background:#c4c4c4;border-top:1px solid #fff;border-left:1px solid #fff;border-right:2px solid #1a1a1a;border-bottom:2px solid #1a1a1a"></div>
<div class="t" style="left:2316.52px;top:216px;font-size:16.5px;color:#1a1a1a;transform:scaleX(0.9769);transform-origin:0 0;">Release Notes</div>
<svg class="ic" style="left:-8px;top:201px" width="46" height="46" viewBox="0 0 46 46"><circle cx="23" cy="23" r="22" fill="#6a9fe2" stroke="#4a7cc8" stroke-width="1.5"/><circle cx="26.5" cy="10.5" r="2.6" fill="#fff"/><path d="M18,18 q4,-1.5 7,-1.5 l-4,19 q2,0 4,-1 l0,1.5 q-4,1.5 -8,1.5 l4,-18 q-2,0 -3,0.3z" fill="#fff"/></svg>
<svg class="ic" style="left:2451px;top:213px" width="20" height="19" viewBox="0 0 20 19"><path d="M2,1.5 l16,16 M18,1.5 l-16,16" stroke="#2c4c9c" stroke-width="2.6"/></svg>
<div class="a" style="left:2478px;top:145px;width:2px;height:915px;background:#8c8c8c"></div>
<div class="a" style="left:2480px;top:145px;width:66px;height:915px;background:#c0c0c0"></div>
<div class="a" style="left:36px;top:276px;width:2419px;height:784px;background:#fff"></div>
<div class="a" style="left:0;top:252px;width:2455px;height:23px;background:#c0c0c0"></div>
<div class="a" style="left:1248px;top:252px;width:827px;height:24px;background:#000080"></div>
<div class="a" style="left:0;top:275px;width:1248px;height:1px;background:#111"></div>
<div class="a" style="left:2075px;top:275px;width:380px;height:1px;background:#111"></div>
<div class="a" style="left:0;top:276px;width:35px;height:784px;background:#c0c0c0"></div>
<div class="a" style="left:35px;top:252px;width:1px;height:808px;background:#111;z-index:4"></div>
<div class="a" style="left:36px;top:252px;width:1px;height:808px;background:#b4b4b4;z-index:4"></div>
<div class="a" style="left:0;top:276px;width:1248px;height:1px;background:#9a9a9a;z-index:4"></div>
<div class="a" style="left:2075px;top:276px;width:380px;height:1px;background:#9a9a9a;z-index:4"></div>
<div class="a" style="left:1248px;top:276px;width:827px;height:1px;background:#8080c0;z-index:4"></div>
<div class="a" style="left:275px;top:252px;width:1px;height:23px;background:#111"></div>
<div class="a" style="left:276px;top:252px;width:1px;height:23px;background:#7a7a7a"></div>
<div class="a" style="left:275px;top:276px;width:1px;height:784px;background:#c6c6c6;z-index:3"></div>
<div class="a" style="left:276px;top:276px;width:1px;height:784px;background:#e6e6e6;z-index:1"></div>
<div class="a" style="left:652px;top:252px;width:1px;height:23px;background:#111"></div>
<div class="a" style="left:653px;top:252px;width:1px;height:23px;background:#7a7a7a"></div>
<div class="a" style="left:652px;top:276px;width:1px;height:784px;background:#c6c6c6;z-index:3"></div>
<div class="a" style="left:653px;top:276px;width:1px;height:784px;background:#e6e6e6;z-index:1"></div>
<div class="a" style="left:1247px;top:276px;width:1px;height:784px;background:#c6c6c6;z-index:3"></div>
<div class="a" style="left:1248px;top:276px;width:1px;height:784px;background:#e6e6e6;z-index:1"></div>
<div class="a" style="left:2074px;top:276px;width:1px;height:784px;background:#c6c6c6;z-index:3"></div>
<div class="a" style="left:2075px;top:276px;width:1px;height:784px;background:#e6e6e6;z-index:1"></div>
<div class="a" style="left:2179px;top:252px;width:1px;height:23px;background:#111"></div>
<div class="a" style="left:2180px;top:252px;width:1px;height:23px;background:#7a7a7a"></div>
<div class="a" style="left:2179px;top:276px;width:1px;height:784px;background:#c6c6c6;z-index:3"></div>
<div class="a" style="left:2180px;top:276px;width:1px;height:784px;background:#e6e6e6;z-index:1"></div>
<div class="a" style="left:2284px;top:252px;width:1px;height:23px;background:#111"></div>
<div class="a" style="left:2285px;top:252px;width:1px;height:23px;background:#7a7a7a"></div>
<div class="a" style="left:2284px;top:276px;width:1px;height:784px;background:#c6c6c6;z-index:3"></div>
<div class="a" style="left:2285px;top:276px;width:1px;height:784px;background:#e6e6e6;z-index:1"></div>
<div class="a" style="left:2389px;top:252px;width:1px;height:23px;background:#111"></div>
<div class="a" style="left:2390px;top:252px;width:1px;height:23px;background:#7a7a7a"></div>
<div class="a" style="left:2389px;top:276px;width:1px;height:784px;background:#c6c6c6;z-index:3"></div>
<div class="a" style="left:2390px;top:276px;width:1px;height:784px;background:#e6e6e6;z-index:1"></div>
<div class="a" style="left:1247px;top:252px;width:1px;height:23px;background:#111"></div>
<div class="t" style="left:127.0px;width:60px;text-align:center;top:255px;font-size:18px;color:#1a1a1a">A</div>
<div class="t" style="left:435.5px;width:60px;text-align:center;top:255px;font-size:18px;color:#1a1a1a">B</div>
<div class="t" style="left:921.5px;width:60px;text-align:center;top:255px;font-size:18px;color:#1a1a1a">C</div>
<div class="t" style="left:1632.5px;width:60px;text-align:center;top:255px;font-size:18px;color:#fff">D</div>
<div class="t" style="left:2098.5px;width:60px;text-align:center;top:255px;font-size:18px;color:#1a1a1a">E</div>
<div class="t" style="left:2203.5px;width:60px;text-align:center;top:255px;font-size:18px;color:#1a1a1a">F</div>
<div class="t" style="left:2308.5px;width:60px;text-align:center;top:255px;font-size:18px;color:#1a1a1a">G</div>
<div class="t" style="left:2412.4px;width:60px;text-align:center;top:255px;font-size:18px;color:#1a1a1a">H</div>
<div class="a" style="left:0;top:305px;width:35px;height:1px;background:#111"></div>
<div class="a" style="left:38px;top:305px;width:2417px;height:1px;background:#c6c6c6;z-index:2"></div>
<div class="a" style="left:38px;top:306px;width:2417px;height:1px;background:#e8e8e8;z-index:1"></div>
<div class="t" style="left:-19px;width:60px;text-align:center;top:282.5px;font-size:18px;color:#1a1a1a;transform:scaleX(1.05)">1</div>
<div class="a" style="left:0;top:335px;width:35px;height:1px;background:#111"></div>
<div class="a" style="left:38px;top:335px;width:2417px;height:1px;background:#c6c6c6;z-index:2"></div>
<div class="a" style="left:38px;top:336px;width:2417px;height:1px;background:#e8e8e8;z-index:1"></div>
<div class="t" style="left:-19px;width:60px;text-align:center;top:312.5px;font-size:18px;color:#1a1a1a;transform:scaleX(1.05)">2</div>
<div class="a" style="left:0;top:365px;width:35px;height:1px;background:#111"></div>
<div class="a" style="left:38px;top:365px;width:2417px;height:1px;background:#c6c6c6;z-index:2"></div>
<div class="a" style="left:38px;top:366px;width:2417px;height:1px;background:#e8e8e8;z-index:1"></div>
<div class="t" style="left:-19px;width:60px;text-align:center;top:342.5px;font-size:18px;color:#1a1a1a;transform:scaleX(1.05)">3</div>
<div class="a" style="left:0;top:395px;width:35px;height:1px;background:#111"></div>
<div class="a" style="left:38px;top:395px;width:2417px;height:1px;background:#c6c6c6;z-index:2"></div>
<div class="a" style="left:38px;top:396px;width:2417px;height:1px;background:#e8e8e8;z-index:1"></div>
<div class="t" style="left:-19px;width:60px;text-align:center;top:372.5px;font-size:18px;color:#1a1a1a;transform:scaleX(1.05)">4</div>
<div class="a" style="left:0;top:425px;width:35px;height:1px;background:#111"></div>
<div class="a" style="left:38px;top:425px;width:2417px;height:1px;background:#c6c6c6;z-index:2"></div>
<div class="a" style="left:38px;top:426px;width:2417px;height:1px;background:#e8e8e8;z-index:1"></div>
<div class="t" style="left:-19px;width:60px;text-align:center;top:402.5px;font-size:18px;color:#1a1a1a;transform:scaleX(1.05)">5</div>
<div class="a" style="left:0;top:455px;width:35px;height:1px;background:#111"></div>
<div class="a" style="left:38px;top:455px;width:2417px;height:1px;background:#c6c6c6;z-index:2"></div>
<div class="a" style="left:38px;top:456px;width:2417px;height:1px;background:#e8e8e8;z-index:1"></div>
<div class="t" style="left:-19px;width:60px;text-align:center;top:432.5px;font-size:18px;color:#1a1a1a;transform:scaleX(1.05)">6</div>
<div class="a" style="left:0;top:485px;width:35px;height:1px;background:#111"></div>
<div class="a" style="left:38px;top:485px;width:2417px;height:1px;background:#c6c6c6;z-index:2"></div>
<div class="a" style="left:38px;top:486px;width:2417px;height:1px;background:#e8e8e8;z-index:1"></div>
<div class="t" style="left:-19px;width:60px;text-align:center;top:462.5px;font-size:18px;color:#1a1a1a;transform:scaleX(1.05)">7</div>
<div class="a" style="left:0;top:515px;width:35px;height:1px;background:#111"></div>
<div class="a" style="left:38px;top:515px;width:2417px;height:1px;background:#c6c6c6;z-index:2"></div>
<div class="a" style="left:38px;top:516px;width:2417px;height:1px;background:#e8e8e8;z-index:1"></div>
<div class="t" style="left:-19px;width:60px;text-align:center;top:492.5px;font-size:18px;color:#1a1a1a;transform:scaleX(1.05)">8</div>
<div class="a" style="left:0;top:545px;width:35px;height:1px;background:#111"></div>
<div class="a" style="left:38px;top:545px;width:2417px;height:1px;background:#c6c6c6;z-index:2"></div>
<div class="a" style="left:38px;top:546px;width:2417px;height:1px;background:#e8e8e8;z-index:1"></div>
<div class="t" style="left:-19px;width:60px;text-align:center;top:522.5px;font-size:18px;color:#1a1a1a;transform:scaleX(1.05)">9</div>
<div class="a" style="left:0;top:575px;width:35px;height:1px;background:#111"></div>
<div class="a" style="left:38px;top:575px;width:2417px;height:1px;background:#c6c6c6;z-index:2"></div>
<div class="a" style="left:38px;top:576px;width:2417px;height:1px;background:#e8e8e8;z-index:1"></div>
<div class="t" style="left:-19px;width:60px;text-align:center;top:552.5px;font-size:18px;color:#1a1a1a;transform:scaleX(1.05)">10</div>
<div class="a" style="left:0;top:605px;width:35px;height:1px;background:#111"></div>
<div class="a" style="left:38px;top:605px;width:2417px;height:1px;background:#c6c6c6;z-index:2"></div>
<div class="a" style="left:38px;top:606px;width:2417px;height:1px;background:#e8e8e8;z-index:1"></div>
<div class="t" style="left:-19px;width:60px;text-align:center;top:582.5px;font-size:18px;color:#1a1a1a;transform:scaleX(1.05)">11</div>
<div class="a" style="left:0;top:635px;width:35px;height:1px;background:#111"></div>
<div class="a" style="left:38px;top:635px;width:2417px;height:1px;background:#c6c6c6;z-index:2"></div>
<div class="a" style="left:38px;top:636px;width:2417px;height:1px;background:#e8e8e8;z-index:1"></div>
<div class="t" style="left:-19px;width:60px;text-align:center;top:612.5px;font-size:18px;color:#1a1a1a;transform:scaleX(1.05)">12</div>
<div class="a" style="left:0;top:665px;width:35px;height:1px;background:#111"></div>
<div class="a" style="left:38px;top:665px;width:2417px;height:1px;background:#c6c6c6;z-index:2"></div>
<div class="a" style="left:38px;top:666px;width:2417px;height:1px;background:#e8e8e8;z-index:1"></div>
<div class="t" style="left:-19px;width:60px;text-align:center;top:642.5px;font-size:18px;color:#1a1a1a;transform:scaleX(1.05)">13</div>
<div class="a" style="left:0;top:695px;width:35px;height:1px;background:#111"></div>
<div class="a" style="left:38px;top:695px;width:2417px;height:1px;background:#c6c6c6;z-index:2"></div>
<div class="a" style="left:38px;top:696px;width:2417px;height:1px;background:#e8e8e8;z-index:1"></div>
<div class="t" style="left:-19px;width:60px;text-align:center;top:672.5px;font-size:18px;color:#1a1a1a;transform:scaleX(1.05)">14</div>
<div class="a" style="left:0;top:725px;width:35px;height:1px;background:#111"></div>
<div class="a" style="left:38px;top:725px;width:2417px;height:1px;background:#c6c6c6;z-index:2"></div>
<div class="a" style="left:38px;top:726px;width:2417px;height:1px;background:#e8e8e8;z-index:1"></div>
<div class="t" style="left:-19px;width:60px;text-align:center;top:702.5px;font-size:18px;color:#1a1a1a;transform:scaleX(1.05)">15</div>
<div class="a" style="left:0;top:755px;width:35px;height:1px;background:#111"></div>
<div class="a" style="left:38px;top:755px;width:2417px;height:1px;background:#c6c6c6;z-index:2"></div>
<div class="a" style="left:38px;top:756px;width:2417px;height:1px;background:#e8e8e8;z-index:1"></div>
<div class="t" style="left:-19px;width:60px;text-align:center;top:732.5px;font-size:18px;color:#1a1a1a;transform:scaleX(1.05)">16</div>
<div class="a" style="left:0;top:785px;width:35px;height:1px;background:#111"></div>
<div class="a" style="left:38px;top:785px;width:2417px;height:1px;background:#c6c6c6;z-index:2"></div>
<div class="a" style="left:38px;top:786px;width:2417px;height:1px;background:#e8e8e8;z-index:1"></div>
<div class="t" style="left:-19px;width:60px;text-align:center;top:762.5px;font-size:18px;color:#1a1a1a;transform:scaleX(1.05)">17</div>
<div class="a" style="left:0;top:815px;width:35px;height:1px;background:#111"></div>
<div class="a" style="left:38px;top:815px;width:2417px;height:1px;background:#c6c6c6;z-index:2"></div>
<div class="a" style="left:38px;top:816px;width:2417px;height:1px;background:#e8e8e8;z-index:1"></div>
<div class="t" style="left:-19px;width:60px;text-align:center;top:792.5px;font-size:18px;color:#1a1a1a;transform:scaleX(1.05)">18</div>
<div class="a" style="left:0;top:845px;width:35px;height:1px;background:#111"></div>
<div class="a" style="left:38px;top:845px;width:2417px;height:1px;background:#c6c6c6;z-index:2"></div>
<div class="a" style="left:38px;top:846px;width:2417px;height:1px;background:#e8e8e8;z-index:1"></div>
<div class="t" style="left:-19px;width:60px;text-align:center;top:822.5px;font-size:18px;color:#1a1a1a;transform:scaleX(1.05)">19</div>
<div class="a" style="left:0;top:846px;width:35px;height:29px;background:#000080"></div>
<div class="a" style="left:0;top:875px;width:35px;height:1px;background:#111"></div>
<div class="a" style="left:38px;top:875px;width:2417px;height:1px;background:#c6c6c6;z-index:2"></div>
<div class="a" style="left:38px;top:876px;width:2417px;height:1px;background:#e8e8e8;z-index:1"></div>
<div class="t" style="left:-19px;width:60px;text-align:center;top:852.5px;font-size:18px;color:#fff;transform:scaleX(1.05)">20</div>
<div class="a" style="left:0;top:905px;width:35px;height:1px;background:#111"></div>
<div class="a" style="left:38px;top:905px;width:2417px;height:1px;background:#c6c6c6;z-index:2"></div>
<div class="a" style="left:38px;top:906px;width:2417px;height:1px;background:#e8e8e8;z-index:1"></div>
<div class="t" style="left:-19px;width:60px;text-align:center;top:882.5px;font-size:18px;color:#1a1a1a;transform:scaleX(1.05)">21</div>
<div class="a" style="left:0;top:935px;width:35px;height:1px;background:#111"></div>
<div class="a" style="left:38px;top:935px;width:2417px;height:1px;background:#c6c6c6;z-index:2"></div>
<div class="a" style="left:38px;top:936px;width:2417px;height:1px;background:#e8e8e8;z-index:1"></div>
<div class="t" style="left:-19px;width:60px;text-align:center;top:912.5px;font-size:18px;color:#1a1a1a;transform:scaleX(1.05)">22</div>
<div class="a" style="left:0;top:965px;width:35px;height:1px;background:#111"></div>
<div class="a" style="left:38px;top:965px;width:2417px;height:1px;background:#c6c6c6;z-index:2"></div>
<div class="a" style="left:38px;top:966px;width:2417px;height:1px;background:#e8e8e8;z-index:1"></div>
<div class="t" style="left:-19px;width:60px;text-align:center;top:942.5px;font-size:18px;color:#1a1a1a;transform:scaleX(1.05)">23</div>
<div class="a" style="left:0;top:995px;width:35px;height:1px;background:#111"></div>
<div class="a" style="left:38px;top:995px;width:2417px;height:1px;background:#c6c6c6;z-index:2"></div>
<div class="a" style="left:38px;top:996px;width:2417px;height:1px;background:#e8e8e8;z-index:1"></div>
<div class="t" style="left:-19px;width:60px;text-align:center;top:972.5px;font-size:18px;color:#1a1a1a;transform:scaleX(1.05)">24</div>
<div class="a" style="left:0;top:1025px;width:35px;height:1px;background:#111"></div>
<div class="a" style="left:38px;top:1025px;width:2417px;height:1px;background:#c6c6c6;z-index:2"></div>
<div class="a" style="left:38px;top:1026px;width:2417px;height:1px;background:#e8e8e8;z-index:1"></div>
<div class="t" style="left:-19px;width:60px;text-align:center;top:1002.5px;font-size:18px;color:#1a1a1a;transform:scaleX(1.05)">25</div>
<div class="a" style="left:0;top:1055px;width:35px;height:1px;background:#111"></div>
<div class="a" style="left:38px;top:1055px;width:2417px;height:1px;background:#c6c6c6;z-index:2"></div>
<div class="a" style="left:38px;top:1056px;width:2417px;height:1px;background:#e8e8e8;z-index:1"></div>
<div class="t" style="left:-19px;width:60px;text-align:center;top:1032.5px;font-size:18px;color:#1a1a1a;transform:scaleX(1.05)">26</div>
<div class="a" style="left:2455px;top:252px;width:24px;height:808px;background:#c8c8c8"></div>
<div class="a" style="left:2455px;top:252px;width:24px;height:8px;background:#8c8c8c"></div>
<div class="a" style="left:2461px;top:255px;width:12px;height:2px;background:#111"></div>
<div class="a" style="left:2455px;top:260px;width:24px;height:25px;background:#c0c0c0;border-top:2px solid #fff;border-left:2px solid #fff;border-right:2px solid #1a1a1a;border-bottom:2px solid #1a1a1a"></div>
<div class="a" style="left:2462px;top:268px;width:0;height:0;border-left:5px solid transparent;border-right:5px solid transparent;border-bottom:5px solid #8a8a8a"></div>
<div class="a" style="left:2461px;top:273px;width:12px;height:2px;background:#fff"></div>
<div class="a" style="left:2455px;top:285px;width:24px;height:411px;background:#c0c0c0;border-top:2px solid #fff;border-left:2px solid #fff;border-right:2px solid #1a1a1a;border-bottom:2px solid #1a1a1a"></div>
<div class="a" style="left:2455px;top:696px;width:23px;height:364px;background:#cbcbcb"></div>
<div class="a" style="left:2478px;top:696px;width:1px;height:364px;background:#555"></div>
<div class="a" style="left:2479px;top:627px;width:10px;height:110px;background:#050505"></div>
<div class="a" style="left:2481px;top:677px;width:0;height:0;border-top:5px solid transparent;border-bottom:5px solid transparent;border-left:7px solid #b0b0b0"></div>
<svg class="ic" style="left:2510px;top:160px" width="16" height="12" viewBox="0 0 16 12"><path d="M0.5,1.5 h15 M0.5,6 h15 M0.5,10.5 h15" stroke="#3a3a3a" stroke-width="1.6"/></svg>
<div class="a" style="left:2496px;top:189px;width:45px;height:46px;border:1px dotted #a0b8d4"></div>
<svg class="ic" style="left:2504px;top:195px" width="31" height="31" viewBox="0 0 31 31"><rect x="1" y="1" width="29" height="29" rx="2" fill="#f6f6f6" stroke="#888" stroke-width="1.6"/><rect x="4.5" y="10.5" width="21" height="10.5" rx="5.2" fill="#5b9be6"/><circle cx="20.5" cy="15.8" r="4.4" fill="#fff" stroke="#7aa8d8" stroke-width="0.8"/></svg>
<svg class="ic" style="left:2502px;top:238px" width="38" height="36" viewBox="0 0 38 36"><path d="M1,24 l8.5,-23 h6 l8.5,23 h-6 l-1.8,-5 h-7.4 l-1.8,5z M11,14 h4 l-2,-7z" fill="#4a4a4a" fill-rule="evenodd"/><path d="M17,33 l15,-16" stroke="#666" stroke-width="3"/><path d="M17,33 l15,-16" stroke="#f0f0f0" stroke-width="1.5"/><path d="M30,19 l6,-9 l-2,10z" fill="#c07030"/><circle cx="17" cy="33" r="2" fill="#a080d0"/></svg>
<svg class="ic" style="left:2501px;top:288px" width="36" height="31" viewBox="0 0 36 31"><rect x="3" y="3" width="27" height="21" transform="rotate(-7 16 14)" fill="#e8e8e8" stroke="#8a8a8a" stroke-width="1"/><path d="M5,5 l24,-3" stroke="#5a90d8" stroke-width="2.5" transform="rotate(-2 16 14)"/><rect x="5.5" y="6.5" width="29" height="22" fill="#fff" stroke="#8a8a8a" stroke-width="1.2"/><rect x="7.5" y="8.5" width="25" height="10" fill="#5a9ae0"/><rect x="7.5" y="18" width="25" height="8.5" fill="#e8b850"/><path d="M7.5,18 q6,-3 12,0 q6,2 13,-1 v1.5 h-25z" fill="#f4f0e0"/><path d="M12,19 l1.2,2.4 l2.6,0.3 l-1.9,1.8 l0.5,2.6 l-2.4,-1.3 l-2.4,1.3 l0.5,-2.6 l-1.9,-1.8 l2.6,-0.3z" fill="#e03a30"/></svg>
<svg class="ic" style="left:2502px;top:333px" width="35" height="34" viewBox="0 0 35 34"><circle cx="17" cy="17" r="15.5" fill="#e4e4e4" stroke="#8a8a8a" stroke-width="1.5"/><circle cx="17" cy="17" r="12" fill="#3c4a78" stroke="#2a3460" stroke-width="0.8"/><path d="M24,7 l-9.5,8 l4.5,4z" fill="#f4f4f4" stroke="#999" stroke-width="0.5"/><path d="M14.5,15 l-4.5,12 l9,-8z" fill="#d84040" stroke="#803020" stroke-width="0.6"/></svg>
<svg class="ic" style="left:2504px;top:382px" width="30" height="29" viewBox="0 0 30 29"><path d="M4,27 v-16 q0,-8 7,-8 h3 v3.5 h-2 q-4,0 -4,4 v2 h5 v3.5 h-5 v11z" fill="#3a3a3a"/><path d="M15,13 l12,14 M27,13 l-12,14" stroke="#3a3a3a" stroke-width="3.6"/></svg>
<div class="cell" style="left:37.1px;top:282px;transform:scaleX(1.0693);font-weight:bold;text-decoration:underline;color:#1c1c1c;">User</div>
<div class="cell" style="left:276.8px;top:282px;transform:scaleX(1.0665);font-weight:bold;text-decoration:underline;color:#1c1c1c;">Job Title</div>
<div class="cell" style="left:654.3px;top:282px;transform:scaleX(1.0609);font-weight:bold;text-decoration:underline;color:#1c1c1c;">Permissions</div>
<div class="cell" style="left:1249.7px;top:282px;transform:scaleX(1.1141);font-weight:bold;text-decoration:underline;color:#1c1c1c;">Notes</div>
<div class="cell" style="left:37.1px;top:312px;transform:scaleX(1.0691);color:#1c1c1c;">Ryan.Naylor</div>
<div class="cell" style="left:276.8px;top:312px;transform:scaleX(1.0855);color:#1c1c1c;">First-Line Support Technician</div>
<div class="cell" style="left:654.3px;top:312px;transform:scaleX(1.0249);color:#1c1c1c;">SMB</div>
<div class="cell" style="left:1249.7px;top:312px;transform:scaleX(1.0799);color:#1c1c1c;">Has Kerberos Pre-Auth disabled temporarily to test legacy systems.</div>
<div class="cell" style="left:37.1px;top:342px;transform:scaleX(1.1124);color:#1c1c1c;">Marie.Bryant</div>
<div class="cell" style="left:276.8px;top:342px;transform:scaleX(1.0855);color:#1c1c1c;">First-Line Support Technician</div>
<div class="cell" style="left:654.3px;top:342px;transform:scaleX(1.0249);color:#1c1c1c;">SMB</div>
<div class="cell" style="left:37.1px;top:372px;transform:scaleX(1.1076);color:#1c1c1c;">Lacey.Miller</div>
<div class="cell" style="left:276.8px;top:372px;transform:scaleX(1.0726);color:#1c1c1c;">Second-Line Support Technician</div>
<div class="cell" style="left:654.3px;top:372px;transform:scaleX(1.0738);color:#1c1c1c;">Remote Management Users</div>
<div class="cell" style="left:37.1px;top:402px;transform:scaleX(1.1214);text-decoration:line-through;color:#e8403a;">Todd.Wolfe</div>
<div class="cell" style="left:276.8px;top:402px;transform:scaleX(1.0726);color:#1c1c1c;">Second-Line Support Technician</div>
<div class="cell" style="left:654.3px;top:402px;transform:scaleX(1.0738);color:#1c1c1c;">Remote Management Users</div>
<div class="cell" style="left:1249.7px;top:402px;transform:scaleX(1.0796);color:#1c1c1c;">Leaver. Password was reset to NightT1meP1dg3on14 and account deleted.</div>
<div class="cell" style="left:37.1px;top:432px;transform:scaleX(1.0548);color:#1c1c1c;">Jeremy.Combs</div>
<div class="cell" style="left:276.8px;top:432px;transform:scaleX(1.0872);color:#1c1c1c;">Third-Line Support Technician</div>
<div class="cell" style="left:654.3px;top:432px;transform:scaleX(1.0706);color:#1c1c1c;">Remote Management Users.</div>
<div class="cell" style="left:1249.7px;top:432px;transform:scaleX(1.067);color:#1c1c1c;">Has access to Software folder.</div>
<div class="cell" style="left:37.1px;top:462px;transform:scaleX(1.1424);color:#1c1c1c;">Administrator</div>
<div class="cell" style="left:276.8px;top:462px;transform:scaleX(1.1479);color:#1c1c1c;">Administrator</div>
<div class="cell" style="left:654.3px;top:462px;transform:scaleX(1.1232);color:#1c1c1c;">Domain Admin</div>
<div class="cell" style="left:1249.7px;top:462px;transform:scaleX(1.0894);color:#1c1c1c;">Not to be used for daily tasks!</div>
<div class="cell" style="left:37.1px;top:552px;transform:scaleX(1.0688);font-weight:bold;text-decoration:underline;color:#1c1c1c;">Service Accounts</div>
<div class="cell" style="left:37.1px;top:582px;transform:scaleX(1.0486);color:#1c1c1c;">svc_backup</div>
<div class="cell" style="left:654.3px;top:582px;transform:scaleX(1.0816);color:#1c1c1c;">Windows Backup</div>
<div class="cell" style="left:1249.7px;top:582px;transform:scaleX(1.0395);color:#1c1c1c;">Speak to Jeremy!</div>
<div class="cell" style="left:37.1px;top:612px;transform:scaleX(1.0507);color:#1c1c1c;">svc_ldap</div>
<div class="cell" style="left:654.3px;top:612px;transform:scaleX(1.02);color:#1c1c1c;">LDAP Services</div>
<div class="cell" style="left:1249.7px;top:612px;transform:scaleX(1.0617);color:#1c1c1c;">P/W - M1XyC9pW7qT5Vn</div>
<div class="cell" style="left:37.1px;top:642px;transform:scaleX(1.043);color:#1c1c1c;">svc_iis</div>
<div class="cell" style="left:654.3px;top:642px;transform:scaleX(1.118);color:#1c1c1c;">IIS Administration</div>
<div class="cell" style="left:1249.7px;top:642px;transform:scaleX(1.0587);color:#1c1c1c;">P/W - N5pXyW1VqM7CZ8</div>
<div class="cell" style="left:37.1px;top:672px;transform:scaleX(1.1041);color:#1c1c1c;">svc_winrm</div>
<div class="cell" style="left:654.3px;top:672px;transform:scaleX(1.0843);color:#1c1c1c;">Remote Management</div>
<div class="cell" style="left:1249.7px;top:672px;transform:scaleX(1.0605);color:#1c1c1c;">Need to ask Lacey as she reset this recently.</div>
<svg class="ic" style="left:37px;top:327px" width="128.5" height="10"><path d="M1.00,5.60 L4.80,7.30 L10.80,2.50 L16.80,7.30 L22.80,2.50 L28.80,7.30 L34.80,2.50 L40.80,7.30 L46.80,2.50 L52.80,7.30 L58.80,2.50 L64.80,7.30 L70.80,2.50 L76.80,7.30 L82.80,2.50 L88.80,7.30 L94.80,2.50 L100.80,7.30 L106.80,2.50 L112.80,7.30 L118.80,2.50 L124.80,7.30 L126.50,7.30" stroke="#e84545" stroke-width="1.7" fill="none" stroke-linejoin="miter"/></svg>
<svg class="ic" style="left:37px;top:357px" width="137.5" height="10"><path d="M1.00,5.60 L4.80,7.30 L10.80,2.50 L16.80,7.30 L22.80,2.50 L28.80,7.30 L34.80,2.50 L40.80,7.30 L46.80,2.50 L52.80,7.30 L58.80,2.50 L64.80,7.30 L70.80,2.50 L76.80,7.30 L82.80,2.50 L88.80,7.30 L94.80,2.50 L100.80,7.30 L106.80,2.50 L112.80,7.30 L118.80,2.50 L124.80,7.30 L130.80,2.50 L135.50,2.50" stroke="#e84545" stroke-width="1.7" fill="none" stroke-linejoin="miter"/></svg>
<svg class="ic" style="left:37px;top:387px" width="128.0" height="10"><path d="M1.00,5.60 L4.80,7.30 L10.80,2.50 L16.80,7.30 L22.80,2.50 L28.80,7.30 L34.80,2.50 L40.80,7.30 L46.80,2.50 L52.80,7.30 L58.80,2.50 L64.80,7.30 L70.80,2.50 L76.80,7.30 L82.80,2.50 L88.80,7.30 L94.80,2.50 L100.80,7.30 L106.80,2.50 L112.80,7.30 L118.80,2.50 L124.80,7.30 L126.00,7.30" stroke="#e84545" stroke-width="1.7" fill="none" stroke-linejoin="miter"/></svg>
<svg class="ic" style="left:37px;top:417px" width="122.0" height="10"><path d="M1.00,5.60 L4.80,7.30 L10.80,2.50 L16.80,7.30 L22.80,2.50 L28.80,7.30 L34.80,2.50 L40.80,7.30 L46.80,2.50 L52.80,7.30 L58.80,2.50 L64.80,7.30 L70.80,2.50 L76.80,7.30 L82.80,2.50 L88.80,7.30 L94.80,2.50 L100.80,7.30 L106.80,2.50 L112.80,7.30 L118.80,2.50 L120.00,2.50" stroke="#e84545" stroke-width="1.7" fill="none" stroke-linejoin="miter"/></svg>
<svg class="ic" style="left:37.5px;top:447px" width="152.5" height="10"><path d="M1.00,5.60 L4.80,7.30 L10.80,2.50 L16.80,7.30 L22.80,2.50 L28.80,7.30 L34.80,2.50 L40.80,7.30 L46.80,2.50 L52.80,7.30 L58.80,2.50 L64.80,7.30 L70.80,2.50 L76.80,7.30 L82.80,2.50 L88.80,7.30 L94.80,2.50 L100.80,7.30 L106.80,2.50 L112.80,7.30 L118.80,2.50 L124.80,7.30 L130.80,2.50 L136.80,7.30 L142.80,2.50 L148.80,7.30 L150.50,7.30" stroke="#e84545" stroke-width="1.7" fill="none" stroke-linejoin="miter"/></svg>
<svg class="ic" style="left:654px;top:327px" width="51.0" height="10"><path d="M1.00,5.60 L4.80,7.30 L10.80,2.50 L16.80,7.30 L22.80,2.50 L28.80,7.30 L34.80,2.50 L40.80,7.30 L46.80,2.50 L49.00,2.50" stroke="#e84545" stroke-width="1.7" fill="none" stroke-linejoin="miter"/></svg>
<svg class="ic" style="left:654px;top:357px" width="51.0" height="10"><path d="M1.00,5.60 L4.80,7.30 L10.80,2.50 L16.80,7.30 L22.80,2.50 L28.80,7.30 L34.80,2.50 L40.80,7.30 L46.80,2.50 L49.00,2.50" stroke="#e84545" stroke-width="1.7" fill="none" stroke-linejoin="miter"/></svg>
<svg class="ic" style="left:654px;top:657px" width="30.0" height="10"><path d="M1.00,5.60 L4.80,7.30 L10.80,2.50 L16.80,7.30 L22.80,2.50 L28.00,2.50" stroke="#e84545" stroke-width="1.7" fill="none" stroke-linejoin="miter"/></svg>
<svg class="ic" style="left:1393px;top:327px" width="95.0" height="10"><path d="M1.00,5.60 L4.80,7.30 L10.80,2.50 L16.80,7.30 L22.80,2.50 L28.80,7.30 L34.80,2.50 L40.80,7.30 L46.80,2.50 L52.80,7.30 L58.80,2.50 L64.80,7.30 L70.80,2.50 L76.80,7.30 L82.80,2.50 L88.80,7.30 L93.00,7.30" stroke="#e84545" stroke-width="1.7" fill="none" stroke-linejoin="miter"/></svg>
<svg class="ic" style="left:37px;top:597px" width="36.5" height="10"><path d="M1.00,5.60 L4.80,7.30 L10.80,2.50 L16.80,7.30 L22.80,2.50 L28.80,7.30 L34.50,7.30" stroke="#e84545" stroke-width="1.7" fill="none" stroke-linejoin="miter"/></svg>
<svg class="ic" style="left:37px;top:627px" width="36.5" height="10"><path d="M1.00,5.60 L4.80,7.30 L10.80,2.50 L16.80,7.30 L22.80,2.50 L28.80,7.30 L34.50,7.30" stroke="#e84545" stroke-width="1.7" fill="none" stroke-linejoin="miter"/></svg>
<svg class="ic" style="left:37px;top:657px" width="36.5" height="10"><path d="M1.00,5.60 L4.80,7.30 L10.80,2.50 L16.80,7.30 L22.80,2.50 L28.80,7.30 L34.50,7.30" stroke="#e84545" stroke-width="1.7" fill="none" stroke-linejoin="miter"/></svg>
<svg class="ic" style="left:37px;top:687px" width="36.5" height="10"><path d="M1.00,5.60 L4.80,7.30 L10.80,2.50 L16.80,7.30 L22.80,2.50 L28.80,7.30 L34.50,7.30" stroke="#e84545" stroke-width="1.7" fill="none" stroke-linejoin="miter"/></svg>
<svg class="ic" style="left:80.5px;top:627px" width="48.0" height="10"><path d="M1.00,5.60 L4.80,7.30 L10.80,2.50 L16.80,7.30 L22.80,2.50 L28.80,7.30 L34.80,2.50 L40.80,7.30 L46.00,7.30" stroke="#e84545" stroke-width="1.7" fill="none" stroke-linejoin="miter"/></svg>
<svg class="ic" style="left:80.5px;top:657px" width="25.5" height="10"><path d="M1.00,5.60 L4.80,7.30 L10.80,2.50 L16.80,7.30 L22.80,2.50 L23.50,2.50" stroke="#e84545" stroke-width="1.7" fill="none" stroke-linejoin="miter"/></svg>
<svg class="ic" style="left:80.5px;top:687px" width="70.0" height="10"><path d="M1.00,5.60 L4.80,7.30 L10.80,2.50 L16.80,7.30 L22.80,2.50 L28.80,7.30 L34.80,2.50 L40.80,7.30 L46.80,2.50 L52.80,7.30 L58.80,2.50 L64.80,7.30 L68.00,7.30" stroke="#e84545" stroke-width="1.7" fill="none" stroke-linejoin="miter"/></svg>
<div class="a" style="left:1245.5px;top:843px;width:830px;height:33.5px;border:4px solid #000080;z-index:5"></div>
<div class="a" style="left:2071px;top:872px;width:7.5px;height:7.5px;background:#000080;z-index:5"></div>
</body></html>
